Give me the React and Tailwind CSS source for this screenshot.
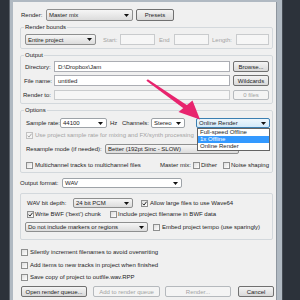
import React from "react";

function Arrow({ color = "#111" }) {
  return (
    <svg width="5" height="3" viewBox="0 0 5 3" className="shrink-0">
      <path d="M0 0H5L2.5 3Z" fill={color} />
    </svg>
  );
}

function Combo({ cls = "", text, white, focus, children }) {
  const base = focus
    ? "border-[#3c7fb1] bg-linear-to-b from-[#eef7fd] to-[#d3eafa]"
    : white
    ? "border-[#9ea3a8] bg-white"
    : "border-[#8e8f8f] bg-linear-to-b from-[#f6f6f6] to-[#dcdcdc]";
  return (
    <div
      className={`relative flex items-center justify-between border rounded-[2px] pl-[2px] pr-[3px] shrink-0 ${base} ${cls}`}
    >
      <span className="whitespace-nowrap leading-none">{text}</span>
      <Arrow />
      {children}
    </div>
  );
}

function Input({ cls = "", text = "", disabled }) {
  return (
    <div
      className={`flex items-center border pl-[3px] shrink-0 whitespace-nowrap leading-none ${
        disabled ? "border-[#c9cbcd] bg-[#f6f6f6]" : "border-[#abadb3] bg-white"
      } ${cls}`}
    >
      {text}
    </div>
  );
}

function Btn({ cls = "", text, disabled }) {
  return (
    <div
      className={`flex items-center justify-center border rounded-[2px] shrink-0 whitespace-nowrap leading-none ${
        disabled
          ? "border-[#b5b9bd] bg-[#f4f4f4] text-[#a3a3a3]"
          : "border-[#707070] bg-linear-to-b from-[#f4f4f4] to-[#d9d9d9]"
      } ${cls}`}
    >
      {text}
    </div>
  );
}

function Check({ checked, disabled }) {
  return (
    <div
      className={`w-[7px] h-[7px] border flex items-center justify-center shrink-0 ${
        disabled
          ? "border-[#c2c2c2] bg-[#f4f4f4]"
          : "border-[#8e8f8f] bg-linear-to-br from-[#dedede] to-white"
      }`}
    >
      {checked && (
        <svg width="5" height="5" viewBox="0 0 5 5">
          <path
            d="M0.5 2.6L2 4.1L4.6 0.7"
            stroke={disabled ? "#a6a6a6" : "#2a2a2a"}
            strokeWidth="1"
            fill="none"
          />
        </svg>
      )}
    </div>
  );
}

export default function App() {
  return (
    <div className="relative w-[300px] h-[300px] overflow-hidden bg-[#2c323a] flex whitespace-nowrap font-['Liberation_Sans',Arial,sans-serif] text-[6px] text-[#1c1c1c]">
      <div className="ml-[9px] w-[274px] h-full bg-[#b0b9c2] border-l border-r border-l-[#5c636b] border-r-[#464c54] pl-[3px] pr-[5px] pt-[2px]">
        <div className="w-full h-full bg-[#f0f0f0] border-r border-[#8d959e] flex flex-col">
          {/* Render row */}
          <div className="flex items-center mt-[7px] h-[12px]">
            <span className="ml-[8px] w-[25px] shrink-0 leading-none">Render:</span>
            <Combo cls="w-[87px] h-[12px]" text="Master mix" />
            <Btn cls="ml-[3px] w-[38px] h-[12px]" text="Presets" />
          </div>

          {/* Render bounds */}
          <fieldset className="mt-[2px] ml-[7px] w-[253px] border border-[#d3d8dc] rounded-[2px] pb-[3px]">
            <legend className="ml-[3px] px-[1px] h-[8px] leading-[8px]">Render bounds</legend>
            <div className="flex items-center mt-[3px] h-[11px]">
              <Combo cls="ml-[4px] w-[71px] h-[11px]" text="Entire project" />
              <span className="ml-[7px] w-[17px] shrink-0 text-[#a3a3a3] leading-none">Start:</span>
              <Input cls="w-[35px] h-[11px]" disabled />
              <span className="ml-[4px] w-[15px] shrink-0 text-[#a3a3a3] leading-none">End</span>
              <Input cls="w-[35px] h-[11px]" disabled />
              <span className="ml-[3px] w-[24px] shrink-0 text-[#a3a3a3] leading-none">Length:</span>
              <Input cls="w-[33px] h-[11px]" disabled />
            </div>
          </fieldset>

          {/* Output */}
          <fieldset className="mt-[2px] ml-[7px] w-[253px] border border-[#d3d8dc] rounded-[2px] pb-[3px]">
            <legend className="ml-[3px] px-[1px] h-[8px] leading-[8px]">Output</legend>
            <div className="flex items-center mt-[2px] h-[11px]">
              <span className="ml-[4px] w-[29px] shrink-0 leading-none">Directory:</span>
              <Input cls="w-[176px] h-[11px]" text="D:\Dropbox\Jam" />
              <Btn cls="ml-[3px] w-[36px] h-[11px]" text="Browse..." />
            </div>
            <div className="flex items-center mt-[3px] h-[11px]">
              <span className="ml-[3px] w-[30px] shrink-0 leading-none">File name:</span>
              <Input cls="w-[176px] h-[11px]" text="untitled" />
              <Btn cls="ml-[3px] w-[36px] h-[11px]" text="Wildcards" />
            </div>
            <div className="flex items-center mt-[4px] h-[10px]">
              <span className="ml-[2px] w-[31px] shrink-0 leading-none">Render to:</span>
              <Input cls="w-[176px] h-[10px]" disabled />
              <Btn cls="ml-[3px] w-[36px] h-[10px]" text="0 files" disabled />
            </div>
          </fieldset>

          {/* Options */}
          <fieldset className="mt-[2px] ml-[7px] w-[253px] border border-[#d3d8dc] rounded-[2px] pb-[3px]">
            <legend className="ml-[3px] px-[1px] h-[8px] leading-[8px]">Options</legend>
            <div className="flex items-center mt-[4px] h-[10px]">
              <span className="ml-[5px] w-[34px] shrink-0 leading-none">Sample rate:</span>
              <Combo cls="w-[47px] h-[10px]" text="44100" white />
              <span className="ml-[3px] w-[12px] shrink-0 leading-none">Hz</span>
              <span className="w-[29px] shrink-0 leading-none">Channels:</span>
              <Combo cls="w-[34px] h-[10px]" text="Stereo" white />
              <Combo cls="ml-[11px] w-[74px] h-[10px]" text="Online Render" focus>
                <div className="absolute left-0 top-[9px] w-[73px] z-10 border border-[#646464] bg-white flex flex-col">
                  <div className="h-[7px] pl-[2px] leading-[7px]">Full-speed Offline</div>
                  <div className="h-[7px] pl-[2px] leading-[7px] bg-[#3399ff] text-white">1x Offline</div>
                  <div className="h-[7px] pl-[2px] leading-[7px]">Online Render</div>
                </div>
              </Combo>
            </div>
            <div className="flex items-center mt-[3px] h-[8px]">
              <span className="ml-[5px]">
                <Check checked disabled />
              </span>
              <span className="ml-[2px] leading-none text-[#a3a3a3]">
                Use project sample rate for mixing and FX/synth processing
              </span>
            </div>
            <div className="flex items-center mt-[5px] h-[10px]">
              <span className="ml-[5px] w-[79px] shrink-0 leading-none">Resample mode (if needed):</span>
              <Combo cls="w-[134px] h-[10px]" text="Better (192pt Sinc - SLOW)" />
            </div>
            <div className="flex items-center mt-[7px] h-[8px]">
              <span className="ml-[5px]">
                <Check />
              </span>
              <span className="ml-[2px] w-[125px] shrink-0 leading-none">
                Multichannel tracks to multichannel files
              </span>
              <span className="w-[33px] shrink-0 leading-none">Master mix:</span>
              <Check />
              <span className="ml-[1px] w-[22px] shrink-0 leading-none">Dither</span>
              <Check />
              <span className="ml-[1px] leading-none">Noise shaping</span>
            </div>
          </fieldset>

          {/* Output format */}
          <div className="flex items-center mt-[5px] h-[10px]">
            <span className="ml-[7px] w-[42px] shrink-0 leading-none">Output format:</span>
            <Combo cls="w-[120px] h-[10px]" text="WAV" white />
          </div>

          {/* WAV group */}
          <div className="mt-[5px] ml-[7px] w-[253px] border border-[#d3d8dc] rounded-[2px] pb-[7px]">
            <div className="flex items-center mt-[4px] h-[10px]">
              <span className="ml-[6px] w-[46px] shrink-0 leading-none">WAV bit depth:</span>
              <Combo cls="w-[60px] h-[10px]" text="24 bit PCM" />
              <span className="ml-[8px]">
                <Check checked />
              </span>
              <span className="ml-[2px] leading-none">Allow large files to use Wave64</span>
            </div>
            <div className="flex items-center mt-[2px] h-[8px]">
              <span className="ml-[6px]">
                <Check checked />
              </span>
              <span className="ml-[1px] w-[75px] shrink-0 leading-none">Write BWF ('bext') chunk</span>
              <Check />
              <span className="ml-[1px] leading-none">Include project filename in BWF data</span>
            </div>
            <div className="flex items-center mt-[4px] h-[10px]">
              <Combo cls="ml-[4px] w-[123px] h-[10px]" text="Do not include markers or regions" />
              <span className="ml-[5px]">
                <Check />
              </span>
              <span className="ml-[2px] leading-none">Embed project tempo (use sparingly)</span>
            </div>
          </div>

          {/* Checkboxes */}
          <div className="flex items-center mt-[8px] h-[8px]">
            <span className="ml-[8px]">
              <Check />
            </span>
            <span className="ml-[2px] leading-none">Silently increment filenames to avoid overwriting</span>
          </div>
          <div className="flex items-center mt-[5px] h-[8px]">
            <span className="ml-[8px]">
              <Check />
            </span>
            <span className="ml-[2px] leading-none">Add items to new tracks in project when finished</span>
          </div>
          <div className="flex items-center mt-[4px] h-[8px]">
            <span className="ml-[8px]">
              <Check />
            </span>
            <span className="ml-[2px] leading-none">Save copy of project to outfile.wav.RPP</span>
          </div>

          {/* Buttons */}
          <div className="flex items-center mt-[5px] h-[11px]">
            <Btn cls="ml-[8px] w-[66px] h-[11px]" text="Open render queue..." />
            <Btn cls="ml-[6px] w-[67px] h-[11px]" text="Add to render queue" disabled />
            <Btn cls="ml-[5px] w-[66px] h-[11px]" text="Render..." disabled />
            <Btn cls="ml-[7px] w-[36px] h-[11px]" text="Cancel" />
          </div>
        </div>
      </div>

      {/* Annotation arrow */}
      <svg
        className="absolute left-0 top-0 pointer-events-none z-20"
        width="300"
        height="300"
        viewBox="0 0 300 300"
      >
        <polygon
          points="146.4,80.8 147.8,79.2 188.2,106 185.4,109.8"
          fill="#e8246e"
        />
        <polygon points="200,119.5 178.5,112 192.5,100.5" fill="#e8246e" />
      </svg>
    </div>
  );
}
